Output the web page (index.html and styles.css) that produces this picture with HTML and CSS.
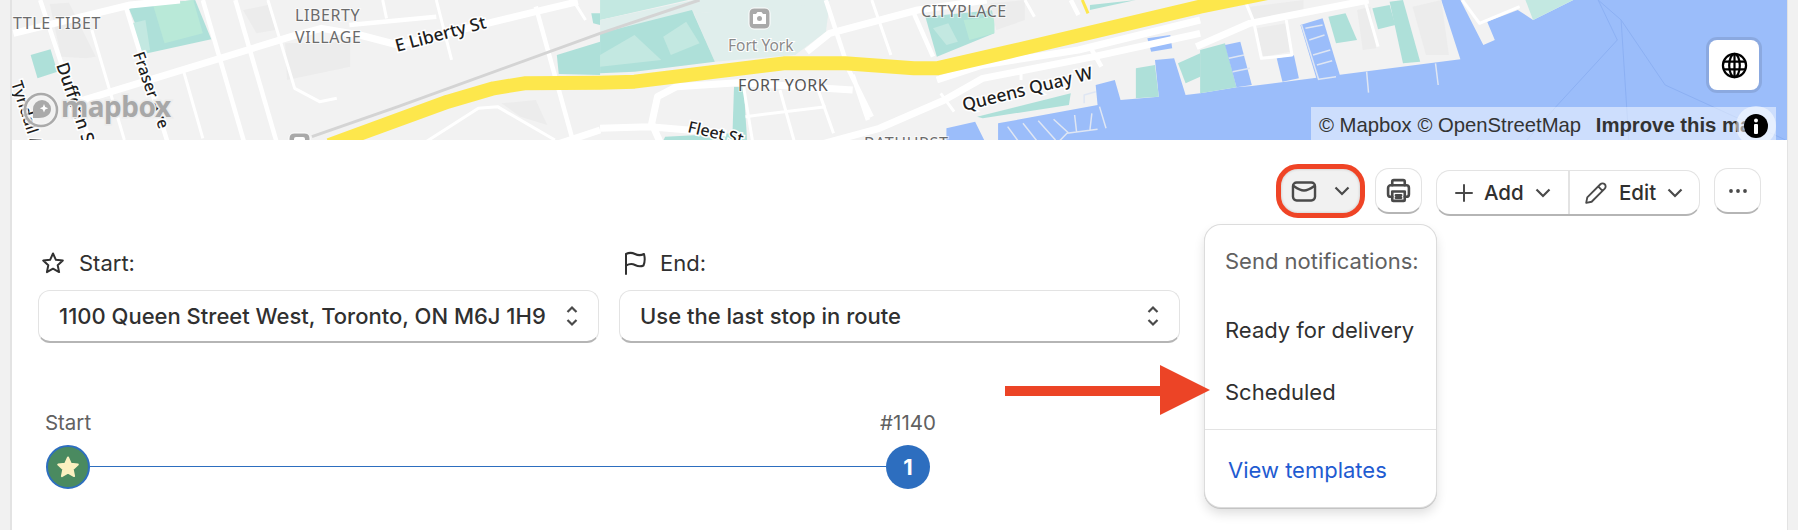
FILE: index.html
```html
<!DOCTYPE html>
<html lang="en">
<head>
    <meta charset="UTF-8">
    <meta name="viewport" content="width=device-width, initial-scale=1.0">
    <title>Route</title>
    <link rel="stylesheet" href="styles.css">
</head>
<body>
    <svg class="sprites" width="0" height="0">
        <symbol id="chev" viewBox="0 0 16 10"><path d="M1.5 1.5 8 8l6.500-6.500"/></symbol>
        <symbol id="updown" viewBox="0 0 14 22"><path d="M2.500 7 7 2.500 11.500 7M2.500 15 7 19.500 11.500 15"/></symbol>
    </svg>
    <div class="card">
        <div class="map">
            <svg class="map-art" viewBox="12 0 1775 140" width="1775" height="140">
                <rect class="land" x="0" y="0" width="1800" height="140"/>
                <!-- shapes were traced in zoomed coords, so one big scale -->
                <g transform="scale(.3827 .3333)">
                    <polygon class="water" points="2473,385 2548,365 2578,435 2608,435 2608,370 2868,315 2863,255 2913,240 2928,300 3028,290 3018,180 3068,175 3098,285 3136,280 3231,262 3271,258 3816,178 3766,0 3816,0 3876,135 3906,120 3886,65 3966,30 4006,60 4111,0 4700,0 4700,435 2473,435"/>
                    <path class="ship" d="M4176,0 4236,60 4256,420M4176,0 4226,120 4066,320 3990,420M4236,60 4351,255 4666,420"/>
                    <g>
                        <polygon class="bld" points="745,130 915,125 915,200 750,240"/>
                        <polygon class="bld" points="130,12 180,8 250,170 225,175 160,170"/>
                        <polygon class="bld" points="635,30 700,15 720,90 670,100"/>
                        <polygon class="bld" points="1310,310 1400,300 1430,375 1360,350"/>
                        <polygon class="park" points="335,20 510,0 552,118 385,160"/>
                        <polygon class="park-lt" points="400,15 505,0 530,100 430,130"/>
                        <polygon class="park-pale" points="345,70 380,60 392,150 365,155"/>
                        <polygon class="park" points="80,165 132,148 150,215 98,235"/>
                        <polygon class="park" points="1455,165 1568,125 1568,225 1460,222"/>
                        <polygon class="park" points="1545,40 1568,40 1568,75 1550,70"/>
                    </g>
                    <g transform="translate(1568 0)">
                        <polygon class="park-pale" points="0,0 230,0 0,60"/>
                        <polygon class="fort" points="0,60 245,0 600,0 590,20 250,40 0,100"/>
                        <polygon class="fort" points="245,40 600,10 590,95 510,165 300,185"/>
                        <polygon class="park" points="0,100 240,30 300,185 90,215 0,220"/>
                        <polygon class="park-pale" points="165,110 225,65 260,130 185,165"/>
                        <polygon class="park-pale" points="0,165 90,105 160,180 0,200"/>
                        <polygon class="park" points="350,260 375,260 385,435 345,435"/>
                        <polygon class="park" points="170,410 345,400 345,435 160,435"/>
                        <polygon class="park" points="850,50 1030,30 1030,100 880,170"/>
                        <polygon class="park-lt" points="950,60 1030,50 1030,100 965,120"/>
                        <polygon class="park-pale" points="870,85 910,70 935,125 905,135"/>
                        <polygon class="bld" points="1020,10 1110,0 1110,60 1035,90"/>
                        <polygon class="park" points="985,350 1230,280 1225,315 1000,355"/>
                        <polygon class="park" points="1400,205 1450,195 1460,290 1400,295"/>
                        <polygon class="park" points="1510,190 1568,160 1568,230 1530,250"/>
                        <polygon class="park" points="1280,15 1400,0 1280,30"/>
                        <polygon class="water" points="1430,115 1490,105 1495,145 1440,155"/>
                        <path class="pier" d="M1065,380 1100,435M1105,370 1150,435M1145,362 1190,420M1185,358 1225,400M1240,345 1245,395M1285,340 1280,390M1190,435 1220,400 1300,388M1305,320 1322,385M1265,310 1265,285 1295,275"/>
                    </g>
                    <g transform="translate(3136 0)">
                        <polygon class="bld" points="130,20 270,0 270,30 140,60"/>
                        <polygon class="bld" points="555,20 630,0 650,165 590,165"/>
                        <polygon class="bld" points="410,30 445,20 460,145 425,150"/>
                        <polygon class="bld" points="145,85 225,70 235,155 165,170"/>
                        <polygon class="park" points="0,150 65,130 95,262 0,280"/>
                        <polygon class="park" points="335,50 380,40 410,120 355,130"/>
                        <polygon class="park" points="450,25 495,15 510,75 465,88"/>
                        <polygon class="park" points="495,5 530,0 575,185 530,190"/>
                        <polygon class="park-pale" points="850,0 975,0 870,60"/>
                        <polygon class="water" points="200,175 245,165 258,235 215,245"/>
                        <polygon class="water" points="262,75 320,55 365,225 305,240"/>
                        <polygon class="water" points="65,135 105,125 135,255 95,262"/>
                        <path class="pier" d="M275,85 320,75M285,120 325,105M295,165 340,150M305,195 345,182M310,238 355,230M265,75 310,240M435,215 440,278M615,190 622,255M85,215 130,205M75,175 115,165"/>
                        <path class="road-s" d="M120,10 140,65 160,175 240,165 225,60M430,0 465,140"/>
                        <path class="road-s" d="M685,0 730,70 835,20"/>
                        <path class="road-l" d="M-10,140 130,70 440,0"/>
                    </g>
                    <!-- left part roads -->
                    <path class="road-s" d="M240,90 325,420M480,215 530,415M700,0 770,265 835,305 880,295M1000,0 1010,55M1140,0 1180,180M1500,5 1530,60M1100,435 1250,325 1300,320 1450,420"/>
                    <path class="road" d="M105,0 160,190 240,435M330,25 440,435M530,0 640,435M615,0 725,435M913,75 1140,50M1400,20 1500,435"/>
                    <path class="road-l" d="M35,100 340,15 470,0M190,310 760,110 840,85 940,105 1040,135 1400,35 1510,5M1450,435 1568,390"/>
                    <path class="rail" d="M815,410 1040,320 1568,100 1828,0"/>
                    <g transform="translate(1568 0)">
                        <path class="road-s" d="M710,0 760,165M1110,0 1135,50M380,350 590,320M375,260 400,435M470,270 510,435M570,270 610,400M1100,210 1100,240M890,280 925,335"/>
                        <path class="road" d="M820,40 870,170M1230,0 1250,45M590,0 650,210 710,350M660,225 700,360M1280,140 1310,200"/>
                        <path class="road-l" d="M540,155 600,100 830,30 1010,0M160,435 135,370 150,290 200,260 360,248 660,270M0,385 130,380 330,400M1568,100 1290,170 1000,235 900,300 730,385 570,435M880,240 1000,195 1250,150 1568,60"/>
                        <path class="hw-thin" d="M1260,0 1275,40"/>
                    </g>
                    <path class="hw" d="M860,435 1170,305 1290,265 1370,250 1568,248 1658,245 2048,190 2208,190 2388,205 2448,205 2638,155 3136,20 3350,-30"/>
                </g>

                <text class="lbl area" x="13" y="29">TTLE TIBET</text>
                <text class="lbl area" x="295" y="21">LIBERTY</text>
                <text class="lbl area" x="295" y="43">VILLAGE</text>
                <text class="lbl area" x="921" y="17">CITYPLACE</text>
                <text class="lbl area dark" x="738" y="91">FORT YORK</text>
                <text class="lbl area" x="864" y="149">BATHURST</text>
                <text class="lbl poi" x="728" y="51">Fort York</text>
                <text class="lbl street" transform="translate(397 52) rotate(-15)">E Liberty St</text>
                <text class="lbl street" transform="translate(964 111) rotate(-14)">Queens Quay W</text>
                <text class="lbl street" transform="translate(56 65) rotate(71)">Dufferin St</text>
                <text class="lbl street sm" transform="translate(133 54) rotate(71)">Fraser Ave</text>
                <text class="lbl street sm" transform="translate(11 83) rotate(72)">Tyndall Ave</text>
                <text class="lbl street sm" transform="translate(687 132) rotate(13)">Fleet St</text>

                <!-- poi icons -->
                <rect class="poi-box" x="749" y="8" width="21" height="21" rx="5"/>
                <path class="poi-cam" d="M753 14h3l1.500-2h4l1.500 2h3v10h-13z"/>
                <circle class="poi-lens" cx="759.500" cy="18.500" r="2.500"/>
                <rect class="poi-box" x="289" y="133" width="21" height="21" rx="5"/>
                <rect class="poi-cam" x="294" y="137" width="11" height="11" rx="2"/>

                <!-- mapbox logo -->
                <circle class="logo-halo" cx="41" cy="110" r="16"/>
                <circle class="logo-ring" cx="41" cy="110" r="16"/>
                <path class="logo-pin" d="M42 100a9 9 0 0 1 9 9c0 6-6 9-12 9h-6v-9a9 9 0 0 1 9-9z"/>
                <path class="logo-spark" d="M44 104l1.200 3 3 1.200-3 1.200-1.200 3-1.200-3-3-1.200 3-1.200z"/>
                <text class="logo-text" x="61" y="117">mapbox</text>
            </svg>
            <div class="globe-btn">
                <svg class="globe" viewBox="0 0 28 28">
                    <circle cx="14" cy="14" r="12"/>
                    <ellipse cx="14" cy="14" rx="5.500" ry="12"/>
                    <path d="M14 2v24M2.500 10h23M2.500 18h23"/>
                </svg>
            </div>
            <div class="attrib">
                <span>© Mapbox</span> <span>© OpenStreetMap</span> <b>Improve this map</b>
            </div>
            <div class="info-halo"></div>
            <svg class="info" viewBox="0 0 24 24">
                <circle cx="12" cy="12" r="12"/>
                <circle class="info-w" cx="12" cy="6.500" r="2"/>
                <rect class="info-w" x="10" y="10" width="4" height="10" rx="1"/>
            </svg>
        </div>

        <div class="toolbar">
            <button class="btn btn-mail">
                <svg class="ico ico-mail" viewBox="0 0 24 20"><rect x="1.500" y="1.500" width="21" height="17" rx="3.500"/><path d="M2.500 5c3.500 2.500 6.500 4 9.500 4s6-1.500 9.500-4"/></svg>
                <svg class="chev"><use href="#chev"/></svg>
            </button>
            <button class="btn btn-print">
                <svg class="ico ico-print" viewBox="0 0 24 24"><path d="M6 7V3.500A1.500 1.500 0 0 1 7.500 2h9A1.500 1.500 0 0 1 18 3.500V7"/><path d="M6 18H4.500A2.500 2.500 0 0 1 2 15.500v-6A2.500 2.500 0 0 1 4.500 7h15A2.500 2.500 0 0 1 22 9.500v6a2.500 2.500 0 0 1-2.500 2.500H18"/><path d="M6 13h12v8a1 1 0 0 1-1 1H7a1 1 0 0 1-1-1zM9.500 16.500h5M9.500 19h5"/></svg>
            </button>
            <div class="btn-group">
                <button class="btn-part btn-add">
                    <svg class="ico ico-plus" viewBox="0 0 18 18"><path d="M9 1v16M1 9h16"/></svg>
                    Add
                    <svg class="chev"><use href="#chev"/></svg>
                </button>
                <button class="btn-part btn-edit">
                    <svg class="ico ico-pencil" viewBox="0 0 22 22"><path d="M2 20l1-5L15 3a2.800 2.800 0 0 1 4 4L7 19zM13 5l4 4"/></svg>
                    Edit
                    <svg class="chev"><use href="#chev"/></svg>
                </button>
            </div>
            <button class="btn btn-more">
                <svg class="dots" viewBox="0 0 20 4"><circle cx="3" cy="2" r="1.900"/><circle cx="10" cy="2" r="1.900"/><circle cx="17" cy="2" r="1.900"/></svg>
            </button>
        </div>

        <div class="fields">
            <div class="field">
                <div class="field-label">
                    <svg class="ico ico-star" viewBox="0 0 24 24"><path d="M12 2.500l2.900 6.300 6.900.8-5.100 4.700 1.400 6.800-6.100-3.400-6.100 3.400 1.400-6.800-5.100-4.700 6.900-.8z"/></svg>
                    <span>Start:</span>
                </div>
                <div class="select">
                    <span>1100 Queen Street West, Toronto, ON M6J 1H9</span>
                    <svg class="updown"><use href="#updown"/></svg>
                </div>
            </div>
            <div class="field">
                <div class="field-label label-end">
                    <svg class="ico ico-flag" viewBox="0 0 24 24"><path d="M3 23V3c3-1.500 6-1.500 9 0s6 1.500 9 0c1 4 1 8-.5 11.500-3 1.500-5.500 1-8.500-.5s-6-1-9 .5"/></svg>
                    <span>End:</span>
                </div>
                <div class="select">
                    <span>Use the last stop in route</span>
                    <svg class="updown"><use href="#updown"/></svg>
                </div>
            </div>
        </div>

        <div class="route">
            <div class="stop">
                <div class="stop-name">Start</div>
                <div class="node node-start">
                    <svg class="node-star" viewBox="0 0 24 24"><path d="M12 2.500l2.900 6.300 6.900.8-5.100 4.700 1.400 6.800-6.100-3.400-6.100 3.400 1.400-6.800-5.100-4.700 6.900-.8z"/></svg>
                </div>
            </div>
            <div class="leg"></div>
            <div class="stop">
                <div class="stop-name">#1140</div>
                <div class="node">1</div>
            </div>
        </div>

        <div class="menu">
            <div class="menu-title">Send notifications:</div>
            <div class="menu-item">Ready for delivery</div>
            <div class="menu-item">Scheduled</div>
            <div class="menu-sep"></div>
            <a class="menu-link">View templates</a>
        </div>

        <svg class="arrow" viewBox="0 0 205 50"><path d="M0 21h155V0l50 25-50 25V31H0z"/></svg>
    </div>
</body>
</html>
```

FILE: styles.css
```css
* {
    box-sizing: border-box;
}

body {
    margin: 0;
    background-color: #f1f1f1;
    font-family: Inter, "Liberation Sans", sans-serif;
    color: #303030;
    overflow: hidden;
}

.sprites {
    position: absolute;
}

.card {
    position: relative;
    margin-left: 10px;
    width: 1778px;
    height: 530px;
    background-color: #fff;
    border-left: 2px solid #e3e3e3;
    border-right: 1px solid #e3e3e3;
    overflow: hidden;
}

/* map */
.map {
    position: relative;
    height: 140px;
    overflow: hidden;
}

.map-art {
    display: block;
}

.land { fill: #f2f2f2; }
.water { fill: #9bbdfa; }
.park { fill: #aee0d9; }
.park-lt { fill: #b9e9d8; }
.park-pale { fill: #c3e8e1; }
.fort { fill: #e0eeec; }
.bld { fill: #ececec; }

.road, .road-s, .road-l, .rail, .hw, .hw-thin, .pier, .ship {
    fill: none;
    vector-effect: non-scaling-stroke;
    stroke-linejoin: round;
}

.road { stroke: #fff; stroke-width: 4.500px; }
.road-s { stroke: #fff; stroke-width: 3px; }
.road-l { stroke: #fff; stroke-width: 7px; }
.rail { stroke: #d4d4d4; stroke-width: 3px; }
.hw { stroke: #fde74c; stroke-width: 14px; }
.hw-thin { stroke: #fde74c; stroke-width: 3px; }
.pier { stroke: #dfe6f3; stroke-width: 1.500px; }
.ship { stroke: #8cb0f3; stroke-width: 1px; }

.lbl {
    font-family: "Noto Sans", sans-serif;
    font-size: 16px;
    paint-order: stroke;
    stroke: #fff;
    stroke-width: 2px;
}

.area { fill: #6b6b6b; letter-spacing: .6px; stroke-opacity: .6; }
.area.dark { fill: #555; }
.poi { fill: #8a8a8a; font-size: 15.500px; }
.street { fill: #1d1d1d; font-size: 17.500px; font-weight: 500; stroke-width: 3px; }
.street.sm { font-size: 16px; }

.poi-box { fill: #a9a9a9; stroke: #fff; stroke-width: 1px; }
.poi-cam { fill: #fff; }
.poi-lens { fill: #a9a9a9; }

.logo-halo { fill: none; stroke: #f4f4f4; stroke-width: 6px; opacity: .8; }
.logo-ring { fill: none; stroke: #aaa; stroke-width: 2.500px; }
.logo-pin { fill: #aaa; }
.logo-spark { fill: #fff; }
.logo-text {
    font-family: "Noto Sans", sans-serif;
    font-weight: 700;
    font-size: 28px;
    letter-spacing: -.5px;
    fill: #a8a8a8;
    paint-order: stroke;
    stroke: #ececec;
    stroke-width: 3px;
}

.globe-btn {
    position: absolute;
    left: 1697px;
    top: 40px;
    width: 50px;
    height: 50px;
    display: flex;
    align-items: center;
    justify-content: center;
    background-color: #fff;
    border-radius: 8px;
    box-shadow: 0 0 0 3px rgba(0, 0, 0, .1);
}

.globe {
    width: 27px;
    height: 27px;
    fill: none;
    stroke: #000;
    stroke-width: 2.300px;
}

.attrib {
    position: absolute;
    left: 1299px;
    top: 107px;
    width: 465px;
    height: 33px;
    padding: 6px 0 0 8px;
    background-color: rgba(255, 255, 255, .5);
    font-family: "Liberation Sans", sans-serif;
    font-size: 20.300px;
    line-height: 24px;
    color: #333;
    white-space: nowrap;
    overflow: hidden;
}

.attrib b {
    margin-left: 9px;
}

.info-halo {
    position: absolute;
    left: 1724px;
    top: 106px;
    width: 40px;
    height: 40px;
    border-radius: 50%;
    background-color: rgba(255, 255, 255, .5);
}

.info {
    position: absolute;
    left: 1732px;
    top: 114px;
    width: 24px;
    height: 24px;
}

.info-w { fill: #fff; }

/* toolbar */
.toolbar {
    display: flex;
    justify-content: flex-end;
    align-items: center;
    height: 54px;
    margin-top: 24px;
    padding-right: 26px;
}

.btn, .btn-group {
    display: flex;
    align-items: center;
    justify-content: center;
    height: 46px;
    padding: 0;
    background-color: #fff;
    border: 1px solid #e3e3e3;
    border-bottom: 2px solid #b5b5b5;
    border-radius: 14px;
    font: inherit;
    color: #303030;
}

.btn-mail {
    width: 89px;
    height: 54px;
    gap: 17px;
    background-color: #f1f1f1;
    border: 5px solid #ef4426;
    border-radius: 22px;
    box-shadow: inset 0 0 3px rgba(0, 0, 0, .2);
}

.btn-print {
    width: 47px;
    margin-left: 10px;
}

.btn-group {
    width: 264px;
    margin-left: 14px;
    margin-top: 4px;
}

.btn-more {
    width: 47px;
    margin-left: 14px;
}

.btn-part {
    display: flex;
    align-items: center;
    height: 100%;
    padding: 0;
    background: none;
    border: 0;
    font: inherit;
    font-size: 20.500px;
    font-weight: 500;
    color: #303030;
}

.btn-add {
    width: 133px;
    padding-left: 18px;
    gap: 11px;
    border-right: 2px solid #e3e3e3;
}

.btn-edit {
    flex: 1;
    padding-left: 14px;
    gap: 11px;
}

.ico {
    fill: none;
    stroke: #4a4a4a;
    stroke-width: 2px;
    stroke-linejoin: round;
    stroke-linecap: round;
}

.ico-mail { width: 26px; height: 21px; stroke-width: 2.300px; }
.ico-print { width: 25px; height: 25px; stroke-width: 2.500px; }
.ico-plus { width: 18px; height: 18px; }
.ico-pencil { width: 24px; height: 24px; stroke-width: 1.700px; }
.ico-star { width: 24px; height: 24px; stroke: #303030; }
.ico-flag { width: 24px; height: 24px; stroke: #303030; }

.chev {
    width: 16px;
    height: 10px;
    fill: none;
    stroke: #4a4a4a;
    stroke-width: 2.200px;
    flex: none;
}

.dots {
    width: 20px;
    height: 4px;
    fill: #4a4a4a;
}

/* start / end */
.fields {
    display: flex;
    gap: 20px;
    margin-top: 33px;
    padding-left: 26px;
}

.field {
    width: 561px;
}

.field-label {
    display: flex;
    align-items: center;
    gap: 14px;
    height: 24px;
    margin-bottom: 15px;
    padding-left: 3px;
    font-size: 22px;
}

.label-end {
    padding-left: 4px;
    gap: 13px;
}

.select {
    display: flex;
    align-items: center;
    justify-content: space-between;
    height: 53px;
    padding: 0 19px 0 20px;
    background-color: #fff;
    border: 1px solid #e3e3e3;
    border-bottom: 2px solid #b5b5b5;
    border-radius: 12px;
    font-size: 22px;
    font-weight: 500;
}

.updown {
    width: 14px;
    height: 22px;
    fill: none;
    stroke: #4a4a4a;
    stroke-width: 2.200px;
}

/* route */
.route {
    display: flex;
    align-items: flex-end;
    width: 884px;
    margin: 68px 0 0 34px;
}

.stop {
    display: flex;
    flex-direction: column;
    align-items: center;
    width: 44px;
    flex: none;
}

.stop-name {
    font-size: 20.500px;
    line-height: 24px;
    margin-bottom: 10px;
    color: #616161;
    white-space: nowrap;
}

.node {
    display: flex;
    align-items: center;
    justify-content: center;
    width: 44px;
    height: 44px;
    border-radius: 50%;
    background-color: #2d6ebf;
    color: #fff;
    font-size: 22px;
    font-weight: 700;
}

.node-start {
    background-color: #4a8a60;
    border: 2px solid #2d6ebf;
}

.node-star {
    width: 24px;
    height: 24px;
    fill: #fbf0c0;
    stroke: #fbf0c0;
    stroke-width: 2px;
    stroke-linejoin: round;
}

.leg {
    flex: 1;
    height: 1px;
    margin-bottom: 22px;
    background-color: #2d6ebf;
}

/* menu */
.menu {
    position: absolute;
    left: 1193px;
    top: 225px;
    width: 231px;
    height: 282px;
    padding-top: 22px;
    background-color: #fff;
    border-radius: 16px;
    box-shadow: 0 0 0 1px #dcdcdc, 0 1px 0 1px #c4c4c4, 0 6px 12px rgba(0, 0, 0, .14);
    font-size: 22px;
}

.menu-title {
    height: 28px;
    line-height: 28px;
    margin-bottom: 24px;
    padding-left: 20px;
    color: #616161;
    white-space: nowrap;
}

.menu-item {
    height: 62px;
    line-height: 62px;
    padding-left: 20px;
}

.menu-sep {
    height: 1px;
    margin-top: 6px;
    background-color: #e3e3e3;
}

.menu-link {
    display: block;
    margin-top: 27px;
    padding-left: 23px;
    line-height: 26px;
    color: #1f5bd1;
}

.arrow {
    position: absolute;
    left: 993px;
    top: 365px;
    width: 205px;
    height: 50px;
    fill: #ec4426;
}
```
